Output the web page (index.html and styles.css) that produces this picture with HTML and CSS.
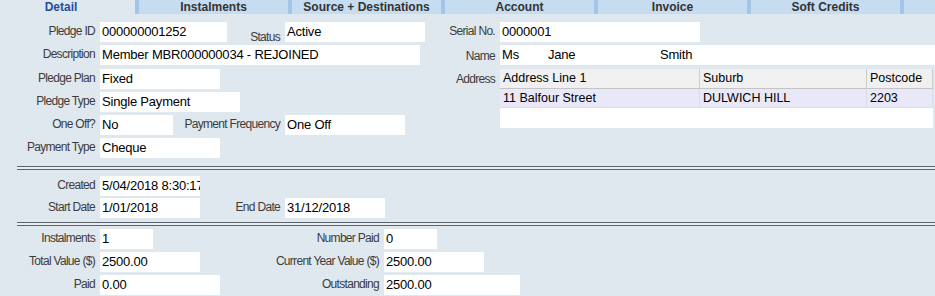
FILE: index.html
```html
<!DOCTYPE html>
<html lang="en">
<head>
    <meta charset="UTF-8">
    <title>Pledge Detail</title>
    <link rel="stylesheet" href="styles.css">
</head>
<body>
    <div class="tabs">
        <div class="tab active">Detail</div>
        <div class="tab">Instalments</div>
        <div class="tab">Source + Destinations</div>
        <div class="tab">Account</div>
        <div class="tab">Invoice</div>
        <div class="tab">Soft Credits</div>
        <div class="tab rest"></div>
    </div>

    <div class="top">
        <div class="left-pane">
            <div class="row">
                <span class="lbl">Pledge ID</span>
                <div class="cell"><span class="val w127">000000001252</span><span class="lbl low">Status</span></div>
                <span class="val w140">Active</span>
            </div>
            <div class="row tall">
                <span class="lbl">Description</span>
                <span class="val w320 span2">Member MBR000000034 - REJOINED</span>
            </div>
            <div class="row">
                <span class="lbl">Pledge Plan</span>
                <div class="cell"><span class="val w120">Fixed</span></div>
            </div>
            <div class="row">
                <span class="lbl">Pledge Type</span>
                <div class="cell"><span class="val w140">Single Payment</span></div>
            </div>
            <div class="row">
                <span class="lbl">One Off?</span>
                <div class="cell"><span class="val w73">No</span><span class="lbl">Payment Frequency</span></div>
                <span class="val w120">One Off</span>
            </div>
            <div class="row">
                <span class="lbl">Payment Type</span>
                <div class="cell"><span class="val w120">Cheque</span></div>
            </div>
        </div>

        <div class="right-pane">
            <div class="rrow">
                <span class="lbl">Serial No.</span>
                <span class="val w200">0000001</span>
            </div>
            <div class="rrow tall">
                <span class="lbl name-lbl">Name</span>
                <div class="name">
                    <span class="part w46">Ms</span>
                    <span class="part w112">Jane</span>
                    <span class="part">Smith</span>
                </div>
            </div>
            <div class="rrow addr">
                <span class="lbl">Address</span>
                <div class="grid">
                    <div class="grid-head">
                        <span class="c1">Address Line 1</span>
                        <span class="c2">Suburb</span>
                        <span class="c3">Postcode</span>
                    </div>
                    <div class="grid-row">
                        <span class="c1">11 Balfour Street</span>
                        <span class="c2">DULWICH HILL</span>
                        <span class="c3">2203</span>
                    </div>
                </div>
            </div>
        </div>
    </div>

    <div class="sep first"></div>

    <div class="dates">
        <div class="row">
            <span class="lbl">Created</span>
            <div class="cell"><span class="val w100">5/04/2018 8:30:17 AM</span></div>
        </div>
        <div class="row">
            <span class="lbl">Start Date</span>
            <div class="cell"><span class="val w100">1/01/2018</span><span class="lbl">End Date</span></div>
            <span class="val w100">31/12/2018</span>
        </div>
    </div>

    <div class="sep second"></div>

    <div class="totals">
        <div class="row wide">
            <span class="lbl">Instalments</span>
            <div class="cell"><span class="val w53">1</span><span class="lbl">Number Paid</span></div>
            <span class="val w53">0</span>
        </div>
        <div class="row wide">
            <span class="lbl">Total Value ($)</span>
            <div class="cell"><span class="val w100">2500.00</span><span class="lbl">Current Year Value ($)</span></div>
            <span class="val w100">2500.00</span>
        </div>
        <div class="row wide">
            <span class="lbl">Paid</span>
            <div class="cell"><span class="val w120">0.00</span><span class="lbl">Outstanding</span></div>
            <span class="val w136">2500.00</span>
        </div>
    </div>
</body>
</html>
```

FILE: styles.css
```css
body {
    margin: 0;
    background-color: #dfe7ef;
    font-family: "Liberation Sans", Arial, sans-serif;
    color: #000;
    overflow: hidden;
}

/* tab strip */
.tabs {
    display: flex;
    height: 14px;
}
.tab {
    flex: none;
    width: 153px;
    box-sizing: border-box;
    border-left: 4px solid #a2c5e8;
    background-color: #c6dcf0;
    color: #333;
    font-size: 12px;
    font-weight: bold;
    line-height: 14px;
    text-align: center;
    white-space: nowrap;
}
.tab.active {
    width: 135px;
    border-left: none;
    background-color: transparent;
    color: #1f4e9a;
    padding-right: 13px;
}
.tab.rest {
    flex: 1;
}

/* labels and values */
.lbl {
    font-size: 12px;
    letter-spacing: -0.7px;
    color: #3c3c3c;
    line-height: 18px;
    text-align: right;
    white-space: nowrap;
}
.lbl.low {
    align-self: flex-end;
    line-height: 16px;
    margin-bottom: -3px;
}
.lbl.name-lbl {
    line-height: 20px;
    padding-top: 1px;
}
.val {
    display: block;
    height: 20px;
    box-sizing: border-box;
    padding-left: 2px;
    background-color: #fff;
    font-size: 13px;
    letter-spacing: -0.2px;
    line-height: 20px;
    white-space: nowrap;
    overflow: hidden;
}
.w46 { width: 46px; }
.w53 { width: 53px; }
.w73 { width: 73px; }
.w100 { width: 100px; }
.w112 { width: 112px; }
.w120 { width: 120px; }
.w127 { width: 127px; }
.w136 { width: 136px; }
.w140 { width: 140px; }
.w200 { width: 200px; }
.w320 { width: 320px; }

/* form rows */
.row {
    display: grid;
    grid-template-columns: 95px 180px auto;
    column-gap: 5px;
    height: 20px;
    margin-bottom: 3px;
}
.row.tall {
    margin-bottom: 4px;
}
.row.wide {
    grid-template-columns: 95px 279px auto;
}
.cell {
    display: flex;
    justify-content: space-between;
    align-items: flex-start;
}
.span2 {
    grid-column: 2 / span 2;
}

.top {
    display: flex;
    padding-top: 8px;
}
.left-pane {
    width: 440px;
    flex: none;
}
.right-pane {
    flex: 1;
}
.rrow {
    display: grid;
    grid-template-columns: 55px 1fr;
    column-gap: 5px;
    height: 20px;
    margin-bottom: 3px;
}
.rrow.tall {
    margin-bottom: 4px;
}
.rrow.addr {
    height: auto;
}
.rrow.addr .lbl {
    padding-top: 1px;
}

.name {
    display: flex;
    background-color: #fff;
    height: 20px;
    font-size: 13px;
    letter-spacing: -0.2px;
    line-height: 20px;
}
.part {
    padding-left: 2px;
    box-sizing: border-box;
}

/* address grid */
.grid {
    height: 59px;
    background-color: #fff;
    font-size: 12.5px;
    margin-right: 2px;
}
.grid-head,
.grid-row {
    display: flex;
}
.grid-head {
    height: 19px;
    line-height: 19px;
    background-color: #f0f0f0;
    border-bottom: 1px solid #c4c4c4;
}
.grid-row {
    height: 18px;
    line-height: 18px;
    background-color: #e8e8f8;
    border-bottom: 1px solid #dcdcec;
}
.grid-head span,
.grid-row span {
    padding-left: 3px;
    box-sizing: border-box;
    border-right: 1px solid #cdcdcd;
}
.grid-row span {
    border-right-color: #dcdcec;
}
.c1 { width: 200px; }
.c2 { width: 167px; }
.c3 { flex: 1; }

/* double rule between sections */
.sep {
    height: 2px;
    margin-left: 17px;
    border-top: 1px solid #5c636b;
    border-bottom: 1px solid #5c636b;
    background-color: #e9edf1;
}
.sep.first {
    margin-top: 5px;
}
.sep.second {
    margin-top: 4px;
}

.dates {
    padding-top: 6px;
}
.dates .row {
    margin-bottom: 2px;
}
.totals {
    padding-top: 3px;
}
```
